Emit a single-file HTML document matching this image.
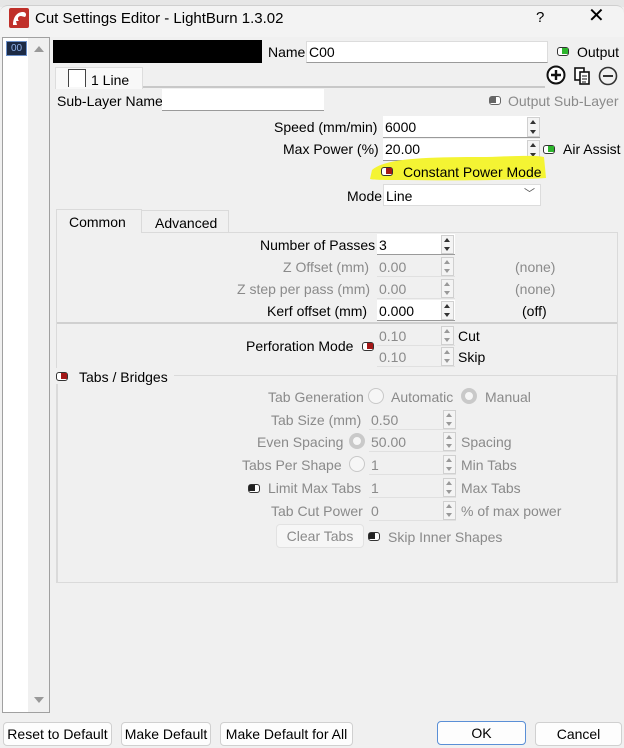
<!DOCTYPE html>
<html><head><meta charset="utf-8"><style>
*{box-sizing:border-box;margin:0;padding:0}
body{width:624px;height:748px;overflow:hidden;background:#f0f0f0;font-family:"Liberation Sans",sans-serif;font-size:14px;color:#000;position:relative}
.a{position:absolute;white-space:nowrap;line-height:16px}
.g{color:#8a8a8a}
.in{position:absolute;background:#fff;border-bottom:1px solid #9a9a9a}
.ind{position:absolute;background:#f0f0f0;border-bottom:1px solid #e0e0e0}
.sp{position:absolute;width:13px;border:1px solid #d0d0d0;background:#f4f4f4}
.sp:before{content:"";position:absolute;left:2px;top:2px;border:3.5px solid transparent;border-bottom:4px solid #333;border-top:0}
.sp:after{content:"";position:absolute;left:2px;bottom:2px;border:3.5px solid transparent;border-top:4px solid #333;border-bottom:0}
.sp.d:before{border-bottom-color:#999}.sp.d:after{border-top-color:#999}
.tg{position:absolute;width:12px;height:9px;border:1.5px solid #333;border-radius:3px;background:#fff}
.tg i{position:absolute;top:0;width:6px;height:6px}
.rd{position:absolute;width:16px;height:16px;border-radius:50%;border:1px solid #c8c8c8;background:#f6f6f6}
.rd.on{border:4px solid #c9c9c9;background:#f6f6f6}
.btn{position:absolute;border:1px solid #d0d0d0;border-radius:4px;background:#fdfdfd;text-align:center;line-height:22px;height:24px}
</style></head><body>
<div style="position:absolute;left:0;top:0;width:624px;height:7px;background:#e6e6e6"></div>
<div style="position:absolute;left:0;top:5px;width:624px;height:32px;background:#f3f3f3;border-radius:8px 8px 0 0;border-top:1px solid #cfcfcf"></div>
<svg style="position:absolute;left:9px;top:8px" width="20" height="20" viewBox="0 0 20 20"><rect width="20" height="20" rx="2" fill="#c0302a"/><path d="M4 17 C4 9 8 4 14 4 C17 4 18 7 16 9 L12 8 C9 8 8 11 10 13 L7 13 L8 17Z" fill="#fff"/></svg>
<div class="a" style="left:35px;top:11px;font-size:15px">Cut Settings Editor - LightBurn 1.3.02</div>
<div class="a" style="left:536px;top:10px;font-size:15px">?</div>
<div class="a" style="left:588px;top:8px;font-size:20px;font-weight:300">✕</div>

<div style="position:absolute;left:2px;top:37px;width:48px;height:676px;background:#fff;border:1px solid #a0a0a0"></div>
<div style="position:absolute;left:28px;top:38px;width:21px;height:674px;background:#f0f0f0"></div>
<div style="position:absolute;left:6px;top:41px;width:21px;height:15px;background:#1c2a44;border:1px solid #6b8fc8;color:#8fb0e8;font-size:10px;text-align:center;line-height:13px">00</div>
<div style="position:absolute;left:34px;top:46px;border:5px solid transparent;border-bottom:6px solid #999;border-top:0"></div>
<div style="position:absolute;left:34px;top:697px;border:5px solid transparent;border-top:6px solid #999;border-bottom:0"></div>

<div style="position:absolute;left:53px;top:40px;width:209px;height:23px;background:#000"></div>
<div class="a" style="left:268px;top:44px">Name</div>
<div class="in" style="left:306px;top:41px;width:242px;height:22px;border:1px solid #dcdcdc;border-bottom-color:#9a9a9a"></div>
<div class="a" style="left:309px;top:44px">C00</div>
<div class="tg" style="left:557px;top:47px"><i style="right:0;background:#2db52d"></i></div>
<div class="a" style="left:577px;top:44px">Output</div>

<div style="position:absolute;left:55px;top:67px;width:88px;height:22px;background:#f8f8f8;border:1px solid #ddd;border-bottom:0"></div>
<div style="position:absolute;left:68px;top:69px;width:18px;height:18px;border:1px solid #444;border-bottom:0;background:#fff"></div>
<div class="a" style="left:91px;top:72px">1 Line</div>
<div style="position:absolute;left:143px;top:86px;width:402px;height:2px;background:#c8c8c8"></div>
<svg style="position:absolute;left:545px;top:64px" width="76" height="24" viewBox="0 0 76 24"><circle cx="11" cy="11" r="8.5" fill="#fff" stroke="#111" stroke-width="2"/><path d="M11 6V16M6 11H16" stroke="#111" stroke-width="2.4"/><rect x="30" y="4" width="9" height="12" fill="#fff" stroke="#111" stroke-width="1.6"/><rect x="35" y="8" width="9" height="12" fill="#fff" stroke="#111" stroke-width="1.6"/><path d="M37 12h5M37 15h5M37 18h4" stroke="#111"/><circle cx="63" cy="12" r="8.5" fill="#f0f0f0" stroke="#333" stroke-width="1.6"/><path d="M58 12H68" stroke="#333" stroke-width="2"/></svg>

<div class="a" style="left:57px;top:93px">Sub-Layer Name</div>
<div class="in" style="left:162px;top:89px;width:162px;height:22px"></div>
<div class="tg" style="left:489px;top:96px;border-color:#666"><i style="left:0;background:#666"></i></div>
<div class="a g" style="left:508px;top:93px">Output Sub-Layer</div>

<div class="a" style="left:274px;top:119px">Speed (mm/min)</div>
<div class="in" style="left:383px;top:116px;width:157px;height:22px"></div>
<div class="a" style="left:385px;top:119px">6000</div>
<div class="sp" style="left:527px;top:117px;height:20px"></div>
<div class="a" style="left:283px;top:141px">Max Power (%)</div>
<div class="in" style="left:383px;top:139px;width:157px;height:22px"></div>
<div class="a" style="left:385px;top:141px">20.00</div>
<div class="sp" style="left:527px;top:140px;height:20px"></div>
<div class="tg" style="left:543px;top:145px"><i style="right:0;background:#2db52d"></i></div>
<div class="a" style="left:563px;top:141px">Air Assist</div>

<svg style="position:absolute;left:366px;top:150px" width="182" height="32"><path d="M6 20 C20 8 60 7 120 7 C150 6 170 5 178 7 L180 28 C150 30 90 31 40 30 C20 30 8 30 4 29Z" fill="#f4f433"/></svg>
<div class="tg" style="left:381px;top:167px"><i style="right:0;background:#a31818"></i></div>
<div class="a" style="left:403px;top:164px">Constant Power Mode</div>

<div class="a" style="left:347px;top:188px">Mode</div>
<div style="position:absolute;left:383px;top:184px;width:158px;height:22px;background:#fff;border:1px solid #dcdcdc"></div>
<div class="a" style="left:386px;top:188px">Line</div>
<div class="a" style="left:524px;top:186px;font-size:11px;color:#555">﹀</div>

<div style="position:absolute;left:56px;top:232px;width:562px;height:351px;border:1px solid #dadada"></div>
<div style="position:absolute;left:56px;top:209px;width:86px;height:24px;background:#f0f0f0;border:1px solid #dadada;border-bottom:0"></div>
<div class="a" style="left:69px;top:214px">Common</div>
<div style="position:absolute;left:142px;top:210px;width:87px;height:22px;border:1px solid #dadada;border-bottom:0;border-left:0"></div>
<div class="a" style="left:155px;top:215px">Advanced</div>

<div class="a" style="left:260px;top:237px">Number of Passes</div>
<div class="in" style="left:377px;top:234px;width:78px;height:21px"></div>
<div class="a" style="left:379px;top:237px">3</div>
<div class="sp" style="left:441px;top:235px;height:19px"></div>
<div class="a g" style="left:283px;top:259px">Z Offset (mm)</div>
<div class="ind" style="left:377px;top:256px;width:78px;height:21px"></div>
<div class="a g" style="left:379px;top:259px">0.00</div>
<div class="sp d" style="left:441px;top:257px;height:19px"></div>
<div class="a g" style="left:515px;top:259px">(none)</div>
<div class="a g" style="left:237px;top:281px">Z step per pass (mm)</div>
<div class="ind" style="left:377px;top:278px;width:78px;height:21px"></div>
<div class="a g" style="left:379px;top:281px">0.00</div>
<div class="sp d" style="left:441px;top:279px;height:19px"></div>
<div class="a g" style="left:515px;top:281px">(none)</div>
<div class="a" style="left:267px;top:303px">Kerf offset (mm)</div>
<div class="in" style="left:377px;top:300px;width:78px;height:21px"></div>
<div class="a" style="left:379px;top:303px">0.000</div>
<div class="sp" style="left:441px;top:301px;height:19px"></div>
<div class="a" style="left:522px;top:303px">(off)</div>
<div style="position:absolute;left:57px;top:322px;width:560px;height:2px;background:#d0d0d0"></div>

<div class="a" style="left:246px;top:338px">Perforation Mode</div>
<div class="tg" style="left:362px;top:342px"><i style="right:0;background:#a31818"></i></div>
<div class="ind" style="left:377px;top:326px;width:78px;height:20px"></div>
<div class="a g" style="left:379px;top:328px">0.10</div>
<div class="sp d" style="left:441px;top:326px;height:19px"></div>
<div class="a" style="left:458px;top:328px">Cut</div>
<div class="ind" style="left:377px;top:347px;width:78px;height:20px"></div>
<div class="a g" style="left:379px;top:349px">0.10</div>
<div class="sp d" style="left:441px;top:347px;height:19px"></div>
<div class="a" style="left:458px;top:349px">Skip</div>

<div style="position:absolute;left:57px;top:375px;width:560px;height:208px;border:1px solid #dadada"></div>
<div style="position:absolute;left:52px;top:368px;width:122px;height:16px;background:#f0f0f0"></div>
<div class="tg" style="left:56px;top:372px"><i style="right:0;background:#a31818"></i></div>
<div class="a" style="left:79px;top:369px">Tabs / Bridges</div>

<div class="a g" style="left:268px;top:389px">Tab Generation</div>
<div class="rd" style="left:368px;top:388px"></div>
<div class="a g" style="left:391px;top:389px">Automatic</div>
<div class="rd on" style="left:461px;top:388px"></div>
<div class="a g" style="left:485px;top:389px">Manual</div>

<div class="a g" style="left:271px;top:412px">Tab Size (mm)</div>
<div class="ind" style="left:369px;top:409px;width:87px;height:21px"></div>
<div class="a g" style="left:371px;top:412px">0.50</div>
<div class="sp d" style="left:443px;top:410px;height:19px"></div>

<div class="a g" style="left:257px;top:434px">Even Spacing</div>
<div class="rd on" style="left:349px;top:433px"></div>
<div class="ind" style="left:369px;top:431px;width:87px;height:21px"></div>
<div class="a g" style="left:371px;top:434px">50.00</div>
<div class="sp d" style="left:443px;top:432px;height:19px"></div>
<div class="a g" style="left:461px;top:434px">Spacing</div>

<div class="a g" style="left:242px;top:457px">Tabs Per Shape</div>
<div class="rd" style="left:349px;top:456px"></div>
<div class="ind" style="left:369px;top:454px;width:87px;height:21px"></div>
<div class="a g" style="left:371px;top:457px">1</div>
<div class="sp d" style="left:443px;top:455px;height:19px"></div>
<div class="a g" style="left:461px;top:457px">Min Tabs</div>

<div class="tg" style="left:248px;top:484px"><i style="left:0;background:#222"></i></div>
<div class="a g" style="left:268px;top:480px">Limit Max Tabs</div>
<div class="ind" style="left:369px;top:477px;width:87px;height:21px"></div>
<div class="a g" style="left:371px;top:480px">1</div>
<div class="sp d" style="left:443px;top:478px;height:19px"></div>
<div class="a g" style="left:461px;top:480px">Max Tabs</div>

<div class="a g" style="left:271px;top:503px">Tab Cut Power</div>
<div class="ind" style="left:369px;top:500px;width:87px;height:21px"></div>
<div class="a g" style="left:371px;top:503px">0</div>
<div class="sp d" style="left:443px;top:501px;height:19px"></div>
<div class="a g" style="left:461px;top:503px">% of max power</div>

<div class="btn g" style="left:276px;top:524px;width:88px;background:#f6f6f6;border-color:#e2e2e2">Clear Tabs</div>
<div class="tg" style="left:368px;top:532px"><i style="left:0;background:#222"></i></div>
<div class="a g" style="left:388px;top:529px">Skip Inner Shapes</div>

<div class="btn" style="left:3px;top:722px;width:109px">Reset to Default</div>
<div class="btn" style="left:121px;top:722px;width:90px">Make Default</div>
<div class="btn" style="left:220px;top:722px;width:133px">Make Default for All</div>
<div class="btn" style="left:437px;top:721px;width:89px;border-color:#5a8fd6">OK</div>
<div class="btn" style="left:535px;top:722px;width:87px">Cancel</div>
</body></html>
